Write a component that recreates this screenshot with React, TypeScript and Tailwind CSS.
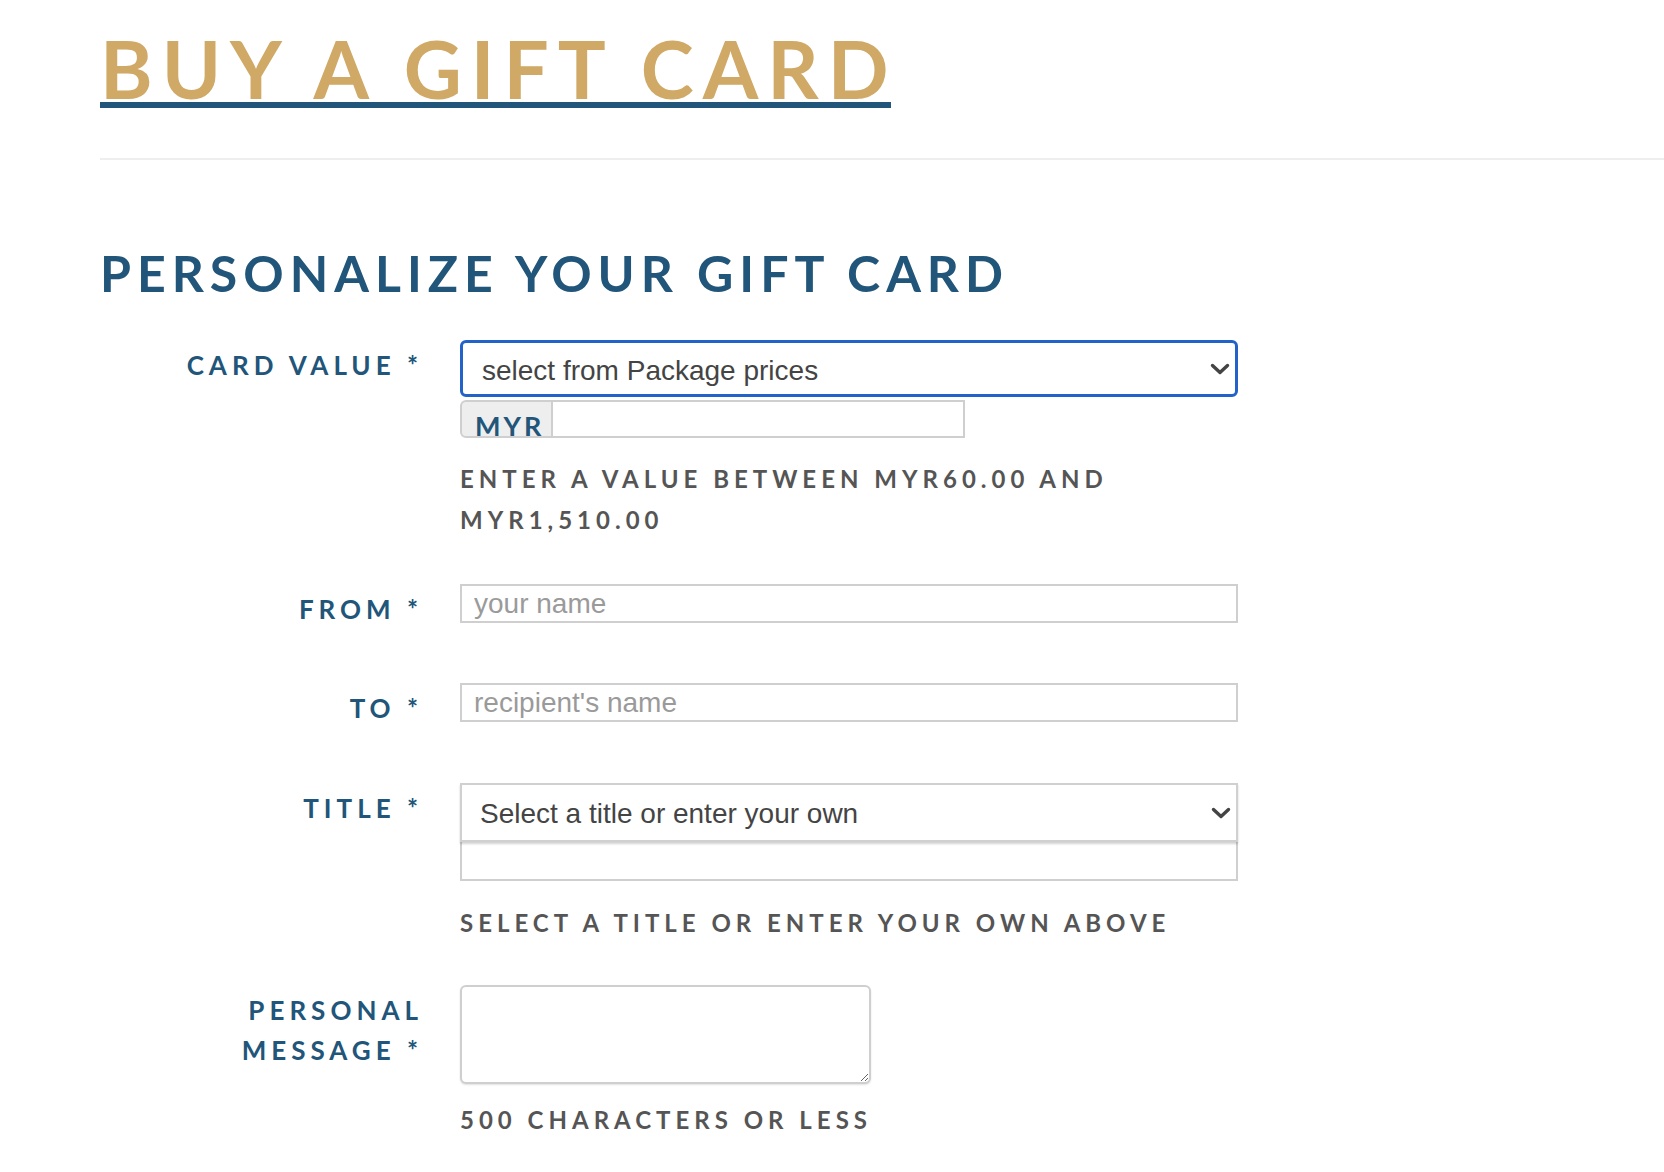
import React from "react";

const Chevron = () => (
  <svg
    className="pointer-events-none absolute right-[5px] top-1/2 -translate-y-1/2"
    width="20"
    height="12"
    viewBox="0 0 20 12"
    fill="none"
  >
    <polyline points="2.5,2.5 10,9.5 17.5,2.5" stroke="#444" strokeWidth="3.4" strokeLinecap="round" strokeLinejoin="round" />
  </svg>
);

function Label({ children }: { children: React.ReactNode }) {
  return (
    <div className="pt-[5px] text-right font-['Lato',sans-serif] text-[26px] font-bold leading-[40px] tracking-[5px] text-[#215579]">
      {children}
    </div>
  );
}

function Help({ children }: { children: React.ReactNode }) {
  return (
    <div className="font-['Lato',sans-serif] text-[24px] font-bold leading-[41px] tracking-[5px] text-[#555]">
      {children}
    </div>
  );
}

export default function App() {
  const row = "grid grid-cols-[323px_778px] items-start gap-x-[37px]";
  const sans = "font-['Liberation_Sans',Arial,sans-serif]";
  return (
    <div className="min-h-[1172px] w-full bg-white pl-[100px] pt-[34px]">
      <h1 className="m-0 leading-none">
        <span className="inline-block border-b-[6px] border-[#215579] pr-[2px] font-['Lato',sans-serif] text-[80px] font-bold leading-[68px] tracking-[9px] text-[#cfa965]">
          BUY A GIFT CAR<span className="tracking-normal">D</span>
        </span>
      </h1>
      <div className="mt-[50px] h-[2px] bg-[#eeeeee]" />
      <h2 className="mt-[88px] font-['Lato',sans-serif] text-[50px] font-bold leading-[50px] tracking-[6px] text-[#215579]">
        PERSONALIZE YOUR GIFT CARD
      </h2>

      <form className="mt-[42px]" onSubmit={(e) => e.preventDefault()}>
        {/* Card value */}
        <div className={row}>
          <Label>CARD VALUE *</Label>
          <div>
            <div className="relative h-[57px] w-full rounded-[6px] border-[3px] border-[#2362c9] bg-white">
              <select
                className={`h-full w-full appearance-none bg-transparent pl-[19px] pr-[40px] pt-[4px] text-[28px] text-[#444] outline-none ${sans}`}
                defaultValue=""
              >
                <option value="">select from Package prices</option>
                <option value="60">MYR60.00</option>
                <option value="150">MYR150.00</option>
              </select>
              <Chevron />
            </div>
            <div className="mt-[3px] flex h-[38px] w-[505px]">
              <div className="flex h-full w-[93px] items-end rounded-l-[6px] border-2 border-[#cfcfcf] bg-[#eeeeee] pl-[13px]">
                <span className="font-['Lato',sans-serif] text-[27px] font-bold leading-[21px] tracking-[3px] text-[#215579]">
                  MYR
                </span>
              </div>
              <input
                type="text"
                className={`h-full flex-1 border-2 border-l-0 border-[#cfcfcf] bg-white px-3 text-[27px] outline-none ${sans}`}
              />
            </div>
            <div className="mt-[20px]">
              <Help>
                ENTER A VALUE BETWEEN MYR60.00 AND
                <br />
                MYR1,510.00
              </Help>
            </div>
          </div>
        </div>

        {/* From */}
        <div className={`${row} mt-[44px]`}>
          <Label>FROM *</Label>
          <div>
            <input
              type="text"
              placeholder="your name"
              className={`block h-[39px] w-full border-2 border-[#cfcfcf] bg-white px-[12px] text-[28px] text-[#333] outline-none placeholder:text-[#9a9a9a] ${sans}`}
            />
          </div>
        </div>

        {/* To */}
        <div className={`${row} mt-[54px]`}>
          <Label>TO *</Label>
          <div>
            <input
              type="text"
              placeholder="recipient's name"
              className={`block h-[39px] w-full border-2 border-[#cfcfcf] bg-white px-[12px] text-[28px] text-[#333] outline-none placeholder:text-[#9a9a9a] ${sans}`}
            />
          </div>
        </div>

        {/* Title */}
        <div className={`${row} mt-[55px]`}>
          <Label>TITLE *</Label>
          <div>
            <div className="relative h-[59px] w-full border-2 border-[#d0d0d0] bg-white shadow-[0_2px_2px_rgba(0,0,0,0.18)]">
              <select
                className={`h-full w-full appearance-none bg-transparent pl-[18px] pr-[40px] pt-[2px] text-[28px] text-[#444] outline-none ${sans}`}
                defaultValue=""
              >
                <option value="">Select a title or enter your own</option>
                <option value="bday">Happy Birthday</option>
                <option value="thanks">Thank You</option>
              </select>
              <Chevron />
            </div>
            <input
              type="text"
              className={`block h-[39px] w-full border-2 border-t-0 border-[#cfcfcf] bg-white px-[12px] text-[27px] outline-none ${sans}`}
            />
            <div className="mt-[21px]">
              <Help>SELECT A TITLE OR ENTER YOUR OWN ABOVE</Help>
            </div>
          </div>
        </div>

        {/* Message */}
        <div className={`${row} mt-[42px]`}>
          <Label>
            PERSONAL
            <br />
            MESSAGE *
          </Label>
          <div>
            <textarea
              className={`block h-[99px] w-[411px] rounded-[6px] border-2 border-[#cfcfcf] bg-white p-2 text-[20px] outline-none shadow-[0_1px_2px_rgba(0,0,0,0.12)] ${sans}`}
            />
            <div className="mt-[15px]">
              <Help>500 CHARACTERS OR LESS</Help>
            </div>
          </div>
        </div>
      </form>
    </div>
  );
}
